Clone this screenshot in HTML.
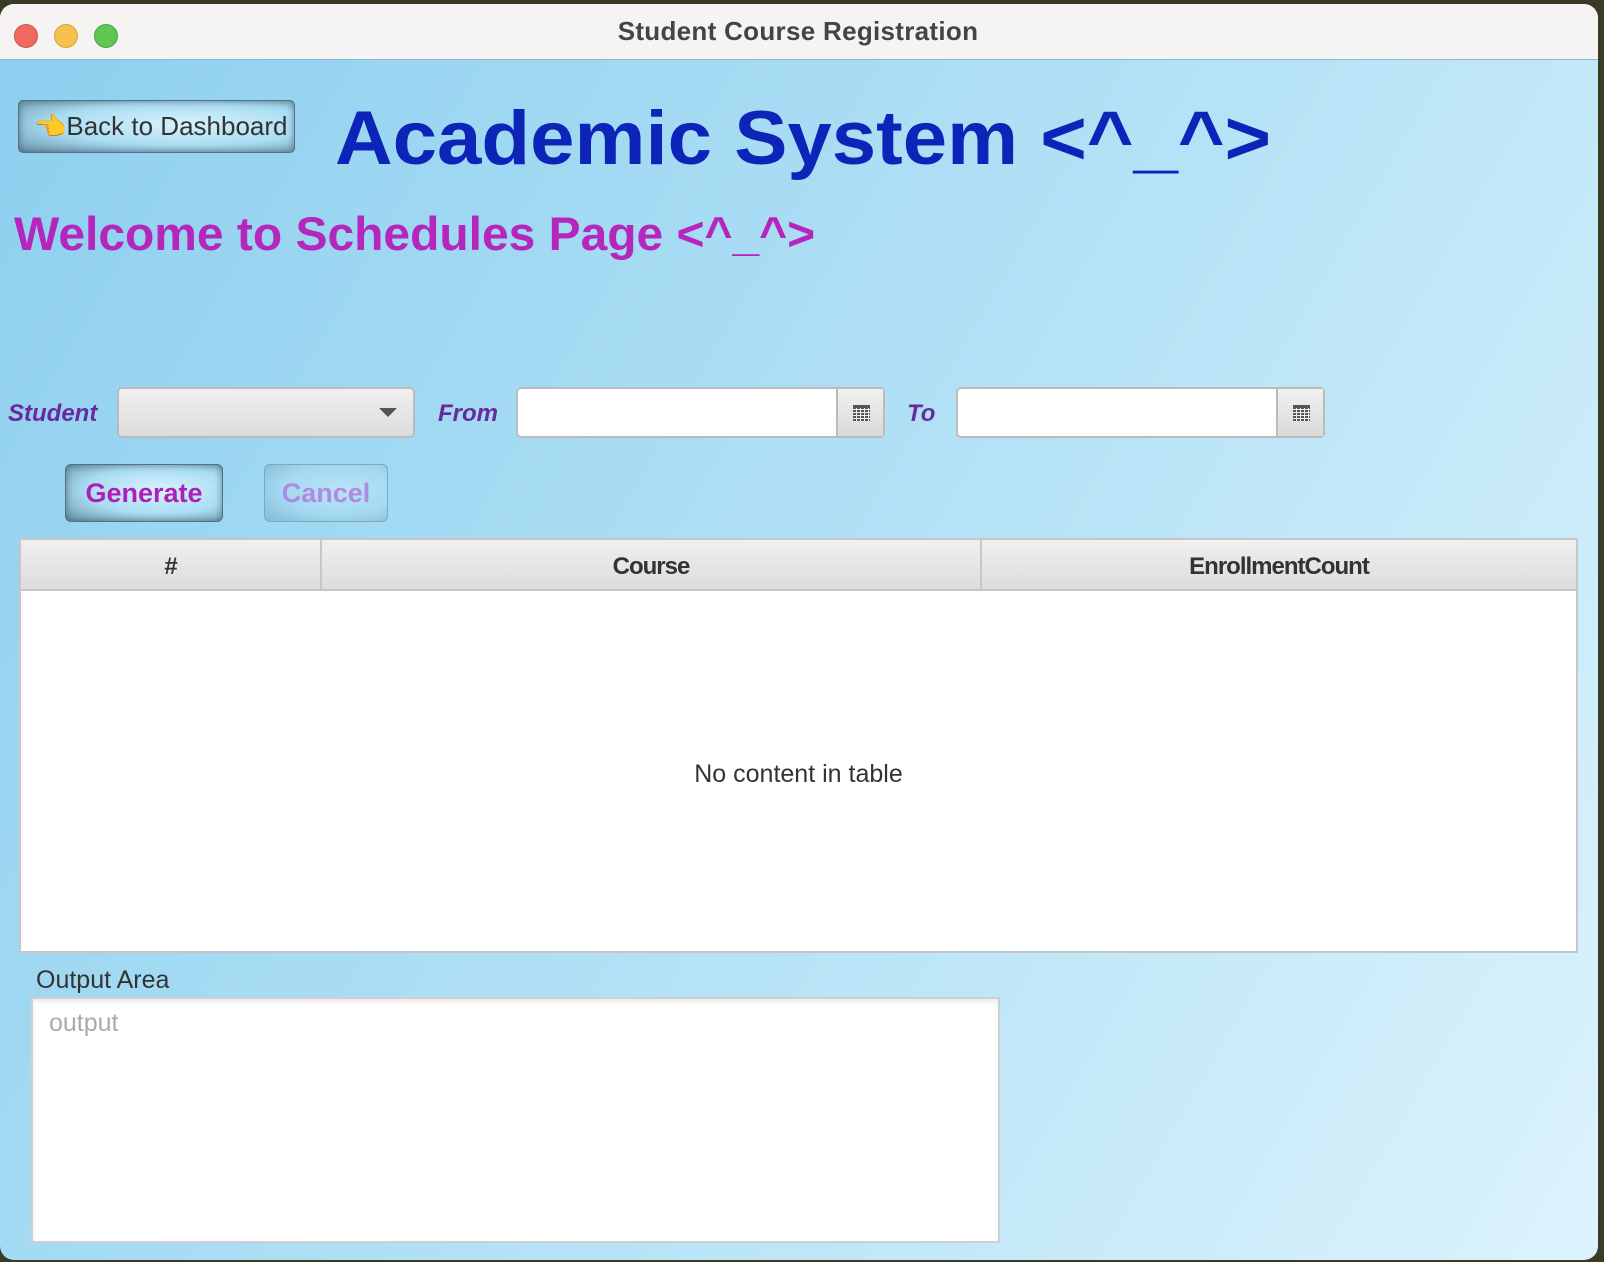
<!DOCTYPE html>
<html><head><meta charset="utf-8"><style>
*{margin:0;padding:0;box-sizing:border-box}
body{width:1604px;height:1262px;background:#3b3a26;position:relative;overflow:hidden;font-family:"Liberation Sans",sans-serif}
.win{position:absolute;left:0;top:4px;width:1598px;height:1256px;border-radius:14px;overflow:hidden;background:linear-gradient(120deg,#8ccfef 0%,#b5e2f6 55%,#dcf3fc 100%)}
.tb{position:absolute;left:0;top:0;width:100%;height:56px;background:#f5f4f2;border-bottom:1px solid #8fb8cc}
.dot{position:absolute;top:20px;width:24px;height:24px;border-radius:50%}
.ttl{position:absolute;left:0;width:1596px;top:12px;text-align:center;font-size:26px;font-weight:bold;color:#444;letter-spacing:.3px}
.abs{position:absolute;white-space:nowrap}
.btn{position:absolute;border-radius:6px;border:1px solid #58707c;background:radial-gradient(ellipse at 60% 45%,#d8f2fc 0%,#a9ddf3 55%,#6a95aa 100%);box-shadow:inset 0 0 8px rgba(40,70,90,.6)}
.field{position:absolute;height:51px;border:2px solid #bbb;border-radius:5px;background:#fff}
.cal{position:absolute;right:0;top:0;width:47px;height:100%;border-left:2px solid #bbb;background:linear-gradient(#f0f0f0,#dadada)}
.cal i{position:absolute;left:15px;top:16px;width:17px;height:16px;border-top:3px solid #555;background:
repeating-linear-gradient(90deg,transparent 0 3px,#eee 3px 4px),repeating-linear-gradient(0deg,#555 0 2px,#eee 2px 3px)}
.lbl{position:absolute;font-style:italic;font-weight:bold;color:#6a2a9e;font-size:24px}
</style></head><body>
<div class="win">
 <div class="tb">
  <div class="dot" style="left:14px;background:#ee6a5e;border:1px solid #d05548"></div>
  <div class="dot" style="left:54px;background:#f5c04e;border:1px solid #d9a33a"></div>
  <div class="dot" style="left:94px;background:#5fc553;border:1px solid #4aa73f"></div>
  <div class="ttl">Student Course Registration</div>
 </div>
 <div class="btn" style="left:18px;top:96px;width:277px;height:53px;border-radius:5px"></div>
 <div class="abs" style="left:34px;top:107px;font-size:26px;color:#333">👈<span style="position:relative;left:0px">Back to Dashboard</span></div>
 <div class="abs" style="left:335px;top:91px;font-size:76px;font-weight:bold;color:#0c25b8;transform:scaleX(1.05);transform-origin:left">Academic System &lt;^_^&gt;</div>
 <div class="abs" style="left:14px;top:202px;font-size:47px;font-weight:bold;color:#b526bc;transform:scaleX(1.02);transform-origin:left">Welcome to Schedules Page &lt;^_^&gt;</div>

 <div class="lbl" style="left:8px;top:396px">Student</div>
 <div class="field" style="left:117px;top:383px;width:298px;background:linear-gradient(#f0f0f0,#dcdcdc)">
  <div style="position:absolute;right:16px;top:19px;border-left:9px solid transparent;border-right:9px solid transparent;border-top:9px solid #555"></div>
 </div>
 <div class="lbl" style="left:438px;top:396px">From</div>
 <div class="field" style="left:516px;top:383px;width:369px"><div class="cal"><i></i></div></div>
 <div class="lbl" style="left:907px;top:396px">To</div>
 <div class="field" style="left:956px;top:383px;width:369px"><div class="cal"><i></i></div></div>

 <div class="btn" style="left:65px;top:460px;width:158px;height:58px"></div>
 <div class="abs" style="left:65px;top:474px;width:158px;text-align:center;font-size:27px;font-weight:bold;color:#b01eb8">Generate</div>
 <div class="btn" style="left:264px;top:460px;width:124px;height:58px;opacity:.45;box-shadow:none"></div>
 <div class="abs" style="left:264px;top:474px;width:124px;text-align:center;font-size:27px;font-weight:bold;color:#b08ae0">Cancel</div>

 <div style="position:absolute;left:19px;top:534px;width:1559px;height:415px;border:2px solid #c6c6c6;background:#fff">
  <div style="position:absolute;left:0;top:0;width:100%;height:51px;background:linear-gradient(#f0f0f0,#dcdcdc);border-bottom:2px solid #c6c6c6;font-size:24px;font-weight:bold;color:#333;letter-spacing:-1px">
   <div class="abs" style="left:0;width:299px;top:13px;text-align:center">#</div>
   <div class="abs" style="left:299px;top:0;width:2px;height:51px;background:#c6c6c6"></div>
   <div class="abs" style="left:301px;width:658px;top:13px;text-align:center">Course</div>
   <div class="abs" style="left:959px;top:0;width:2px;height:51px;background:#c6c6c6"></div>
   <div class="abs" style="left:961px;width:594px;top:13px;text-align:center">EnrollmentCount</div>
  </div>
  <div class="abs" style="left:0;width:100%;top:220px;text-align:center;font-size:25px;color:#333">No content in table</div>
 </div>

 <div class="abs" style="left:36px;top:962px;font-size:25px;color:#333">Output Area</div>
 <div style="position:absolute;left:31px;top:993px;width:969px;height:246px;background:#fff;border:2px solid #cfcfcf;box-shadow:inset 0 3px 4px rgba(0,0,0,.08)">
  <div class="abs" style="left:16px;top:10px;font-size:25px;color:#aaa">output</div>
 </div>
</div>
</body></html>
